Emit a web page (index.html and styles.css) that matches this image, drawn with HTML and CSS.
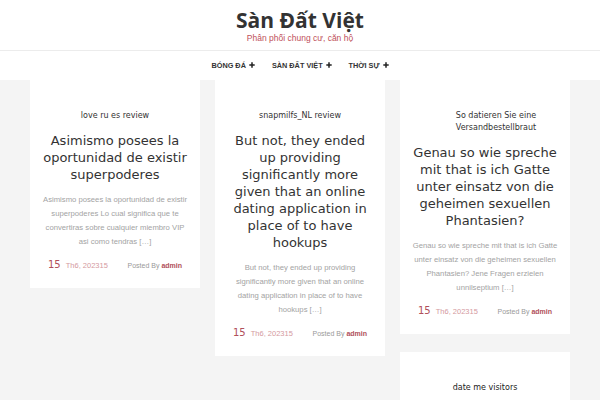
FILE: index.html
```html
<!DOCTYPE html>
<html lang="vi">
<head>
<meta charset="utf-8">
<title>Sàn Đất Việt</title>
<link rel="stylesheet" href="styles.css">
</head>
<body>
<header class="site-header">
  <h1 class="site-title">Sàn Đất Việt</h1>
  <p class="site-tagline">Phân phối chung cư, căn hộ</p>
</header>
<nav class="main-nav">
  <ul class="menu">
    <li class="menu-item">BÓNG ĐÁ <svg class="plus" width="6" height="6" viewBox="0 0 6 6"><path d="M3 0.3V5.7M0.3 3H5.7" stroke="#222" stroke-width="1.5"/></svg></li>
    <li class="menu-item">SÀN ĐẤT VIỆT <svg class="plus" width="6" height="6" viewBox="0 0 6 6"><path d="M3 0.3V5.7M0.3 3H5.7" stroke="#222" stroke-width="1.5"/></svg></li>
    <li class="menu-item">THỜI SỰ <svg class="plus" width="6" height="6" viewBox="0 0 6 6"><path d="M3 0.3V5.7M0.3 3H5.7" stroke="#222" stroke-width="1.5"/></svg></li>
  </ul>
</nav>
<main class="posts">
  <div class="col">
    <article class="card">
      <div class="cat">love ru es review</div>
      <h2 class="title">Asimismo posees la oportunidad de existir superpoderes</h2>
      <p class="excerpt">Asimismo posees la oportunidad de existir superpoderes Lo cual significa que te convertiras sobre cualquier miembro VIP asi como tendras […]</p>
      <div class="meta"><span class="date"><span class="day">15</span><span class="month">Th6, 202315</span></span><span class="by">Posted By <b>admin</b></span></div>
    </article>
  </div>
  <div class="col">
    <article class="card">
      <div class="cat">snapmilfs_NL review</div>
      <h2 class="title">But not, they ended up providing significantly more given that an online dating application in place of to have hookups</h2>
      <p class="excerpt">But not, they ended up providing significantly more given that an online dating application in place of to have hookups […]</p>
      <div class="meta"><span class="date"><span class="day">15</span><span class="month">Th6, 202315</span></span><span class="by">Posted By <b>admin</b></span></div>
    </article>
  </div>
  <div class="col">
    <article class="card">
      <div class="cat cat-shifted">So datieren Sie eine Versandbestellbraut</div>
      <h2 class="title">Genau so wie spreche mit that is ich Gatte unter einsatz von die geheimen sexuellen Phantasien?</h2>
      <p class="excerpt">Genau so wie spreche mit that is ich Gatte unter einsatz von die geheimen sexuellen Phantasien? Jene Fragen erzielen unnilseptium […]</p>
      <div class="meta"><span class="date"><span class="day">15</span><span class="month">Th6, 202315</span></span><span class="by">Posted By <b>admin</b></span></div>
    </article>
    <aside class="card widget">
      <h3 class="widget-title">date me visitors</h3>
    </aside>
  </div>
</main>
</body>
</html>
```
FILE: styles.css
```css
html, body {
  margin: 0;
  padding: 0;
}
body {
  background: #f4f4f4;
  font-family: "DejaVu Sans", sans-serif;
}
.site-header {
  background: #fff;
  text-align: center;
  padding: 8px 0 6px;
  border-bottom: 1px solid #ececec;
}
.site-title {
  margin: 0;
  font: 700 21px/24px "Open Sans", sans-serif;
  color: #333;
}
.site-tagline {
  margin: 0;
  font: 8.5px/12px "Liberation Sans", sans-serif;
  color: #c0505a;
}
.main-nav {
  background: #fff;
  height: 29px;
  display: flex;
  justify-content: center;
  align-items: center;
}
.menu {
  list-style: none;
  margin: 0;
  padding: 0;
  display: flex;
  gap: 17px;
}
.menu-item {
  font: 700 7.3px/1 "Liberation Sans", sans-serif;
  color: #333;
  display: flex;
  align-items: center;
  gap: 3px;
}
.plus {
  display: block;
}
.posts {
  width: 540px;
  margin: 0 auto;
  display: flex;
  gap: 15px;
  align-items: flex-start;
}
.col {
  flex: 1;
  min-width: 0;
  display: flex;
  flex-direction: column;
  gap: 18px;
}
.card {
  background: #fff;
  padding: 30px 11px 16px;
  text-align: center;
}
.cat {
  font-size: 8px;
  line-height: 12px;
  color: #333;
  margin-bottom: 9.5px;
}
.cat-shifted {
  padding-left: 22px;
}
.title {
  margin: 0 0 10px;
  font-weight: 400;
  font-size: 13px;
  line-height: 17px;
  color: #333;
}
.excerpt {
  margin: 0 0 7px;
  padding: 0 1px;
  font: 7.7px/14px "Liberation Sans", sans-serif;
  color: #a3a3a3;
}
.meta {
  display: flex;
  justify-content: space-between;
  align-items: baseline;
  padding: 0 7px;
  line-height: 14px;
}
.day {
  font-size: 10px;
  color: #b0505a;
  margin-right: 5px;
}
.month {
  font: 7.5px "Liberation Sans", sans-serif;
  color: #d49aa0;
}
.by {
  font: 7px "Liberation Sans", sans-serif;
  color: #999;
}
.by b {
  color: #b0505a;
}
.widget {
  padding: 30px 11px 40px;
}
.widget-title {
  margin: 0;
  font-weight: 400;
  font-size: 8px;
  line-height: 12px;
  color: #222;
}
```
